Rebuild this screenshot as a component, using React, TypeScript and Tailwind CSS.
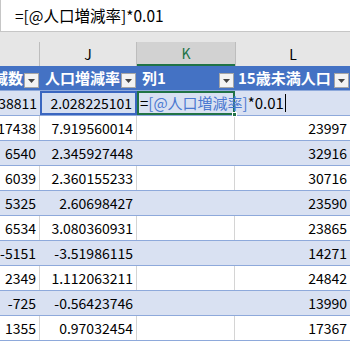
import React from "react";

const rows: [string, string, string][] = [
  ["17438", "7.919560014", "23997"],
  ["6540", "2.345927448", "32916"],
  ["6039", "2.360155233", "30716"],
  ["5325", "2.60698427", "23590"],
  ["6534", "3.080360931", "23865"],
  ["-5151", "-3.51986115", "14271"],
  ["2349", "1.112063211", "24842"],
  ["-725", "-0.56423746", "13990"],
  ["1355", "0.97032454", "17367"],
];

function Drop() {
  return (
    <div className="absolute right-[1px] top-[7px] w-[15px] h-[15px] bg-[#f3f3f3] border border-[#a6a6a6] flex items-center justify-center">
      <svg width="7" height="4" viewBox="0 0 7 4">
        <path d="M0 0 L7 0 L3.5 4 Z" fill="#444" />
      </svg>
    </div>
  );
}

export default function App() {
  const font = { fontFamily: '"Noto Sans CJK JP", "Noto Sans", sans-serif' };
  return (
    <div className="w-[350px] h-[343px] overflow-hidden bg-white text-black" style={font}>
      {/* formula bar */}
      <div className="h-[32px] bg-white border-l border-b border-[#c6c6c6] flex items-center pl-[14px] text-[15.5px]">
        =[@人口増減率]*0.01
      </div>
      <div className="h-[10px] bg-[#e6e6e6]" />
      {/* column headers */}
      <div className="flex h-[24px] bg-[#e6e6e6] text-[14px]">
        <div className="w-[40px] border-r border-[#bdbdbd]" />
        <div className="w-[97px] border-r border-[#bdbdbd] flex items-center justify-center">J</div>
        <div className="w-[98px] bg-[#d2d2d2] border-b-2 border-[#217346] text-[#217346] flex items-center justify-center">K</div>
        <div className="w-[115px] border-l border-[#bdbdbd] flex items-center justify-center">L</div>
      </div>
      {/* table header */}
      <div className="flex h-[25px] bg-[#4472c4] border-b border-[#8ea9db] text-white font-bold text-[15px] leading-[24px]">
        <div className="relative w-[40px] overflow-hidden">
          <span className="absolute right-[17px] top-0 whitespace-nowrap">減数</span>
          <Drop />
        </div>
        <div className="relative w-[97px] pl-[5px] whitespace-nowrap">
          人口増減率
          <Drop />
        </div>
        <div className="relative w-[98px] pl-[5px] whitespace-nowrap">
          列1
          <Drop />
        </div>
        <div className="relative w-[115px] pl-[3px] whitespace-nowrap">
          15歳未満人口
          <Drop />
        </div>
      </div>
      {/* first (editing) row */}
      <div className="relative flex h-[25px] bg-[#d9e1f2] border-b border-[#8ea9db] text-[14px] leading-[24px]">
        <div className="w-[40px] overflow-hidden flex justify-end pr-[3px]">38811</div>
        <div className="w-[97px] flex justify-end pr-[3px] border-2 border-[#3a66c0] leading-[20px] bg-[#d6dff0]">2.028225101</div>
        <div className="w-[98px] border-2 border-[#217346] relative">
          <div className="absolute left-[1px] top-0 h-[20px] flex items-center whitespace-nowrap text-[15px] z-10">
            <span>=</span>
            <span className="text-[#4a78d0]">[@人口増減率]</span>
            <span>*0.01</span>
            <span className="inline-block w-[1px] h-[18px] bg-black ml-[1px]" />
          </div>
          <div className="absolute right-[-4px] bottom-[-4px] w-[5px] h-[5px] bg-[#217346] border border-white" />
        </div>
        <div className="w-[115px]" />
      </div>
      {rows.map((r, i) => {
        const band = i % 2 === 1;
        const vb = band ? "border-[#d9e1f2]" : "border-[#d4d4d4]";
        return (
          <div
            key={i}
            className={`flex h-[25px] border-b border-[#8ea9db] text-[14px] leading-[24px] ${band ? "bg-[#d9e1f2]" : "bg-white"}`}
          >
            <div className={`w-[40px] overflow-hidden flex justify-end pr-[3px] border-r ${vb}`}>{r[0]}</div>
            <div className={`w-[97px] flex justify-end pr-[3px] border-r ${vb}`}>{r[1]}</div>
            <div className={`w-[98px] border-r ${vb}`} />
            <div className="w-[115px] flex justify-end pr-[3px]">{r[2]}</div>
          </div>
        );
      })}
    </div>
  );
}
